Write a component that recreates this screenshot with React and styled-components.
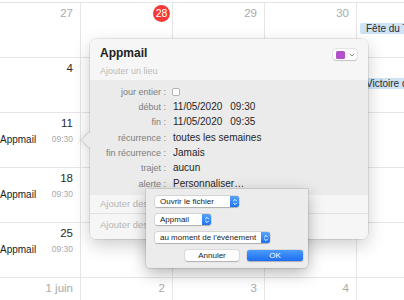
import React from 'react';
import styled, { createGlobalStyle } from 'styled-components';

const GlobalStyle = createGlobalStyle`
    html, body {
        margin: 0;
        padding: 0;
        background: #fff;
        font-family: "Liberation Sans", Arial, sans-serif;
    }
`;

// the fifth column runs past the window edge, so its day numbers are left out
const weeks = [
    [
        { day: '27', muted: true },
        { day: '28', today: true },
        { day: '29', muted: true },
        { day: '30', muted: true },
        { chip: 'Fête du Travail' },
    ],
    [{ day: '4' }, { day: '5' }, { day: '6' }, { day: '7' }, { chip: 'Victoire des alliés' }],
    [{ day: '11', event: true }, { day: '12' }, { day: '13' }, { day: '14' }, {}],
    [{ day: '18', event: true }, { day: '19' }, { day: '20' }, { day: '21' }, {}],
    [{ day: '25', event: true }, { day: '26' }, { day: '27' }, { day: '28' }, {}],
    [
        { day: '1 juin', muted: true },
        { day: '2', muted: true },
        { day: '3', muted: true },
        { day: '4', muted: true },
        {},
    ],
];

const details = [
    { label: 'jour entier :', check: true },
    { label: 'début :', date: '11/05/2020', time: '09:30' },
    { label: 'fin :', date: '11/05/2020', time: '09:35' },
    { label: 'récurrence :', value: 'toutes les semaines' },
    { label: 'fin récurrence :', value: 'Jamais' },
    { label: 'trajet :', value: 'aucun' },
    { label: 'alerte :', value: 'Personnaliser…' },
];

function Stepper() {
    return (
        <StepBox>
            <svg width="6" height="8" viewBox="0 0 6 8">
                <path d="M1.2 3.2 L3 1.4 L4.8 3.2 M1.2 4.8 L3 6.6 L4.8 4.8" stroke="#fff" strokeWidth="1" fill="none" />
            </svg>
        </StepBox>
    );
}

function Popup({ text, width }) {
    return (
        <PopupBox>
            <PopupText $w={width}>{text}</PopupText>
            <Stepper />
        </PopupBox>
    );
}

export default function App() {
    return (
        <Page>
            <GlobalStyle />
            <Grid>
                {weeks.map((week, i) =>
                    week.map((cell, j) => (
                        <Cell key={i + '-' + j}>
                            <DayRow>
                                {cell.today ? (
                                    <Today>{cell.day}</Today>
                                ) : (
                                    cell.day && <DayNum $muted={cell.muted}>{cell.day}</DayNum>
                                )}
                            </DayRow>
                            {cell.event && (
                                <EventLine>
                                    <span>Appmail</span>
                                    <EventTime>09:30</EventTime>
                                </EventLine>
                            )}
                            {cell.chip && <Chip>{cell.chip}</Chip>}
                        </Cell>
                    ))
                )}
            </Grid>

            <Popover>
                <Arrow />
                <Header>
                    <div>
                        <Title>Appmail</Title>
                        <Place>Ajouter un lieu</Place>
                    </div>
                    <ColorChip>
                        <Swatch />
                        <svg width="6" height="4" viewBox="0 0 6 4">
                            <path d="M0.8 0.8 L3 3 L5.2 0.8" stroke="#888" strokeWidth="1" fill="none" />
                        </svg>
                    </ColorChip>
                </Header>
                <Details>
                    {details.map((d) => (
                        <DetailRow key={d.label}>
                            <Label>{d.label}</Label>
                            <Value>
                                {d.check && <Check />}
                                {d.date && (
                                    <>
                                        <span>{d.date}</span>
                                        <Time>{d.time}</Time>
                                    </>
                                )}
                                {d.value}
                            </Value>
                        </DetailRow>
                    ))}
                </Details>
                <Footer>
                    <FootRow>Ajouter des invités</FootRow>
                    <FootRow $last>Ajouter des notes, une URL ou des pièces jointes</FootRow>
                </Footer>
            </Popover>

            <Sheet>
                <Popup text="Ouvrir le fichier" width={75} />
                <Popup text="Appmail" width={47} />
                <Popup text="au moment de l'événement" width={106} />
                <Buttons>
                    <Button $w={54}>Annuler</Button>
                    <Button $w={56} $primary>OK</Button>
                </Buttons>
            </Sheet>
        </Page>
    );
}

const Page = styled.div`
    position: relative;
    width: 404px;
    height: 300px;
    overflow: hidden;
    background: #fff;
`;

const Grid = styled.div`
    display: grid;
    grid-template-columns: 81px repeat(4, 92px);
    grid-auto-rows: 55px;
    margin-top: 2px;
    border-top: 1px solid #e3e3e3;
    width: max-content;
`;

const Cell = styled.div`
    box-sizing: border-box;
    border-right: 1px solid #e6e6e6;
    border-bottom: 1px solid #e6e6e6;
    overflow: hidden;
`;

const DayRow = styled.div`
    display: flex;
    justify-content: flex-end;
    align-items: center;
    height: 20px;
    padding-right: 7px;
`;

const DayNum = styled.span`
    font-size: 11.5px;
    color: ${(p) => (p.$muted ? '#a9a9a9' : '#2b2b2b')};
    white-space: nowrap;
`;

const Today = styled.span`
    width: 17px;
    height: 17px;
    margin-right: -5px;
    border-radius: 50%;
    background: #f23b36;
    color: #fff;
    font-size: 10.5px;
    line-height: 17px;
    text-align: center;
`;

const EventLine = styled.div`
    display: flex;
    justify-content: space-between;
    align-items: center;
    height: 12px;
    padding-right: 7px;
    font-size: 10px;
    color: #222;
`;

const EventTime = styled.span`
    font-size: 8.5px;
    color: #a8a8a8;
`;

const Chip = styled.div`
    margin: 0 0 0 3px;
    height: 11px;
    padding-left: 6px;
    line-height: 11px;
    background: #cfe3f7;
    border-radius: 2px;
    font-size: 10px;
    color: #2c2c2c;
    white-space: nowrap;
    overflow: hidden;
`;

const Popover = styled.div`
    position: absolute;
    left: 90px;
    top: 39px;
    width: 278px;
    z-index: 5;
    border-radius: 6px;
    box-shadow: 0 0 0 0.5px rgba(0, 0, 0, 0.16), 0 6px 18px rgba(0, 0, 0, 0.2);
`;

const Arrow = styled.div`
    position: absolute;
    left: -6px;
    top: 95px;
    width: 12px;
    height: 12px;
    background: #ebebeb;
    transform: rotate(45deg);
    z-index: -1;
    box-shadow: 0 0 0 0.5px rgba(0, 0, 0, 0.16), -2px 2px 5px rgba(0, 0, 0, 0.08);
`;

const Header = styled.div`
    display: flex;
    justify-content: space-between;
    height: 41px;
    padding: 0 11px 0 10px;
    background: #f6f6f6;
    border-radius: 6px 6px 0 0;
`;

const Title = styled.div`
    margin-top: 7px;
    line-height: 14px;
    font-size: 12px;
    font-weight: 700;
    color: #222;
`;

const Place = styled.div`
    margin-top: 5px;
    line-height: 12px;
    font-size: 9px;
    color: #b9b9b9;
`;

const ColorChip = styled.div`
    display: flex;
    align-items: center;
    gap: 4px;
    margin-top: 10px;
    width: 24px;
    height: 11px;
    padding-left: 3px;
    box-sizing: border-box;
    background: #fff;
    border-radius: 3px;
    box-shadow: 0 0 0 0.5px rgba(0, 0, 0, 0.12), 0 0.5px 1px rgba(0, 0, 0, 0.15);
`;

const Swatch = styled.div`
    width: 9px;
    height: 8px;
    border-radius: 1.5px;
    background: #b152cb;
`;

const Details = styled.div`
    padding: 4px 0;
    background: #ebebeb;
`;

const DetailRow = styled.div`
    display: grid;
    grid-template-columns: 76px auto;
    column-gap: 7px;
    align-items: center;
    height: 15.33px;
`;

const Label = styled.div`
    text-align: right;
    font-size: 9px;
    line-height: 12px;
    color: #7c7c7c;
    white-space: nowrap;
`;

const Value = styled.div`
    display: flex;
    align-items: center;
    font-size: 10px;
    line-height: 12px;
    color: #262626;
    white-space: nowrap;
`;

const Time = styled.span`
    margin-left: 8px;
`;

const Check = styled.div`
    width: 8px;
    height: 8px;
    box-sizing: border-box;
    background: #fff;
    border: 1px solid #b3b3b3;
    border-radius: 2px;
    margin-left: -1px;
`;

const Footer = styled.div`
    background: #f6f6f6;
    border-radius: 0 0 6px 6px;
`;

const FootRow = styled.div`
    height: ${(p) => (p.$last ? '20px' : '18px')};
    padding: ${(p) => (p.$last ? '5px 10px 0' : '0 10px')};
    line-height: ${(p) => (p.$last ? '12px' : '18px')};
    border-bottom: ${(p) => (p.$last ? 'none' : '1px solid #e1e1e1')};
    font-size: 9.5px;
    color: #b5b5b5;
    white-space: nowrap;
    overflow: hidden;
`;

const Sheet = styled.div`
    position: absolute;
    left: 146px;
    top: 189px;
    width: 162px;
    height: 79px;
    box-sizing: border-box;
    z-index: 6;
    display: flex;
    flex-direction: column;
    align-items: flex-start;
    gap: 7px;
    padding: 7px 0 0 9px;
    background: #ececec;
    border-radius: 0 0 4px 4px;
    box-shadow: 0 0 0 0.5px rgba(0, 0, 0, 0.18), 0 5px 16px rgba(0, 0, 0, 0.3);
`;

const PopupBox = styled.div`
    display: flex;
    height: 11px;
    border-radius: 2.5px;
    box-shadow: 0 0 0 0.5px rgba(0, 0, 0, 0.15), 0 0.5px 1px rgba(0, 0, 0, 0.2);
    overflow: hidden;
`;

const PopupText = styled.div`
    width: ${(p) => p.$w}px;
    box-sizing: border-box;
    padding-left: 5px;
    background: #fff;
    font-size: 8px;
    line-height: 11px;
    color: #222;
    white-space: nowrap;
    overflow: hidden;
`;

const StepBox = styled.div`
    display: flex;
    align-items: center;
    justify-content: center;
    width: 9px;
    background: linear-gradient(#58a4fb, #1d71f0);
`;

const Buttons = styled.div`
    display: flex;
    gap: 8px;
    margin-left: 30px;
`;

const Button = styled.div`
    width: ${(p) => p.$w}px;
    height: 11px;
    border-radius: 2.5px;
    background: ${(p) => (p.$primary ? 'linear-gradient(#4c9bfa, #1c6ef0)' : '#fff')};
    color: ${(p) => (p.$primary ? '#fff' : '#222')};
    box-shadow: 0 0 0 0.5px rgba(0, 0, 0, 0.12), 0 0.5px 1px rgba(0, 0, 0, 0.2);
    font-size: 8px;
    line-height: 11px;
    text-align: center;
`;
